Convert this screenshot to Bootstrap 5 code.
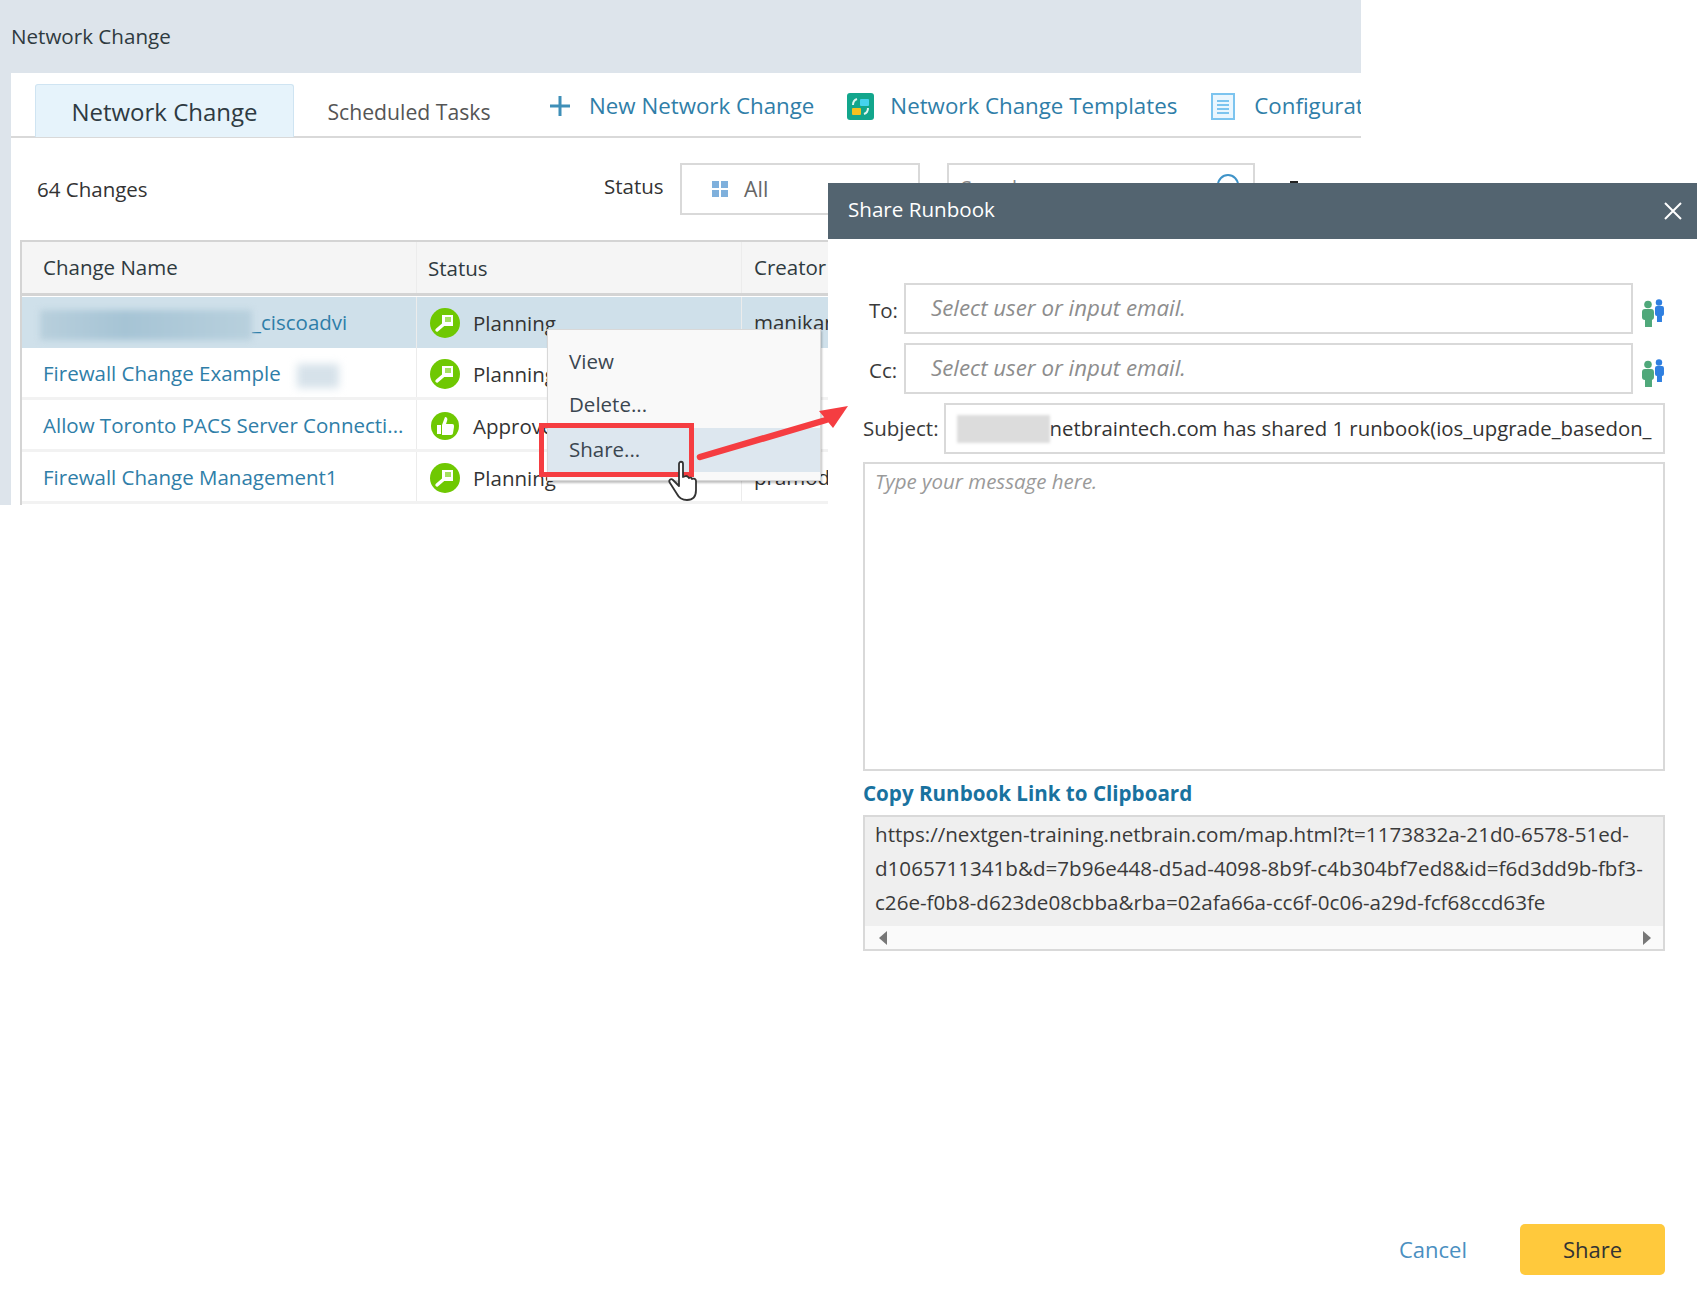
<!DOCTYPE html>
<html lang="en">
<head>
<meta charset="utf-8">
<title>Share Runbook</title>
<link href="https://cdn.jsdelivr.net/npm/bootstrap@5.3.0/dist/css/bootstrap.min.css" rel="stylesheet">
<style>
html,body{height:1311px;width:1697px;overflow:hidden;background:#fff}
body{font-family:"Open Sans","Noto Sans",sans-serif;font-size:20.5px;color:#333;position:relative}
.app-shot{width:1361px;height:505px;background:#dde4eb;overflow:hidden;position:relative}
.app-title{height:73px;padding:21px 0 0 11px;font-size:20.6px;line-height:30px;color:#2f3a40}
.app-body{margin-left:11px;background:#fff;height:432px}
.tab-strip{height:65px;border-bottom:2px solid #d9d9d9;padding-left:24px;position:relative;white-space:nowrap}
.tab-on{flex:none;width:259px;height:53px;margin-top:11px;background:#e6f3fb;border:1px solid #cfe4f2;border-bottom:0;border-radius:3px 3px 0 0;font-size:24px;line-height:54px;text-align:center;color:#2e3a42}
.tab-off{flex:none;width:230px;padding-top:14px;font-size:21.2px;line-height:50px;text-align:center;color:#555}
.act{flex:none;color:#2f7ea8;font-size:22.3px;line-height:30px;white-space:nowrap;height:46px;align-self:flex-start;margin-top:10px}
.filter-bar{height:102px;position:relative}
.count-lab{position:absolute;left:26px;top:36px;line-height:30px}
.status-lab{position:absolute;left:593px;top:33px;line-height:30px}
.box-filter{position:absolute;left:669px;top:25px;width:240px;height:52px;border:2px solid #d9d9d9;padding-left:30px;color:#666;font-size:21.4px}
.box-search{position:absolute;left:936px;top:25px;width:308px;height:52px;border:2px solid #d9d9d9;padding:8px 0 0 12px;color:#888;font-size:20px;line-height:30px}
.search-ring{position:absolute;left:265px;top:6px}
.peek-mark{position:absolute;left:1279px;top:43px;width:8px;height:4px;background:#222}
.grid-wrap{margin-left:9px;width:1341px;border-left:2px solid #d4d4d4;border-top:2px solid #d4d4d4;height:265px}
.g-row{display:flex;height:52px;border-bottom:3px solid #f2f2f2;line-height:50px;background:#fff}
.g-head{background:#f5f5f5;border-bottom:3px solid #d4d4d4;height:54px;line-height:50px;color:#2f3a40}
.g-sel{background:#cfe0ea;border-bottom:0;height:51px;margin-top:1px;line-height:50px}
.c1{width:395px;padding-left:21px;border-right:1px solid #ececec;white-space:nowrap}
.c2{width:325px;padding-left:13px;border-right:1px solid #ececec;white-space:nowrap;display:flex;align-items:center;gap:13px}
.g-head .c2{padding-left:11px}
.g-plain .c2{padding-top:2px}
.c3{padding-left:12px;white-space:nowrap}
.grid-link{color:#2f7ea8;text-decoration:none}
.blur-a{display:inline-block;width:212px;height:30px;margin-left:-3px;vertical-align:middle;background:linear-gradient(90deg,#b8cfdc,#a6c4d5 40%,#b8d0dd);filter:blur(3px)}
.blur-b{display:inline-block;width:42px;height:24px;margin-left:16px;vertical-align:middle;background:#d6e2ea;filter:blur(4px)}
.ctx{position:absolute;left:547px;top:329px;width:274px;height:152px;background:#f9f9f9;border:1px solid #d8d8d8;box-shadow:1px 2px 2px rgba(0,0,0,.25);color:#3b4650;padding-top:13px}
.ctx-it{height:43px;line-height:36px;padding-left:21px}
.ctx-on{background:#dde7ef;height:44px;line-height:42px;margin-top:-1px}
.hl-box{position:absolute;left:539px;top:423px;width:155px;height:54px;border:5px solid #f53d41;pointer-events:none}
.hand{position:absolute;left:667px;top:460px;width:34px;height:42px}
.arrow{position:absolute;left:696px;top:400px;width:154px;height:62px;z-index:5}
.share-dlg{position:absolute;left:828px;top:183px;width:869px;height:1128px;background:#fff}
.dlg-head{height:56px;background:#536470;color:#fff;font-size:20.6px;line-height:53px;padding:0 20px;font-weight:500}
.dlg-x{position:absolute;left:835px;top:18px;width:20px;height:20px}
.dlg-form{padding:0 32px 0 35px;color:#3a3a3a}
.f-row{display:flex;align-items:flex-start;height:51px;margin-top:9px}
.f-row-first{margin-top:44px}
.f-lab{white-space:nowrap;line-height:30px;padding-top:12px}
.f-lab-short{width:32px;margin-left:6px;text-align:left}
.mail-in{width:730px;height:51px;margin-left:3px;border:2px solid #d9d9d9;font-style:italic;color:#8d8d8d;font-size:22.3px;line-height:46px;padding-left:25px;white-space:nowrap}
.subj{flex:1;min-width:0;height:51px;border:2px solid #d9d9d9;margin-left:5px;padding:0 11px;font-size:20.35px;white-space:nowrap;display:flex;align-items:center;color:#333}
.blur-c{flex:none;width:93px;height:28px;background:#dcdcdc;filter:blur(1.5px)}
.msg{height:309px;border:2px solid #d9d9d9;margin-top:8px;padding:2px 10px;font-style:italic;color:#9a9a9a}
.copy-l{display:block;font-weight:700;color:#19729f;font-size:20.6px;line-height:28px;margin-top:8px;text-decoration:none}
.link-box{margin-top:8px;height:136px;border:2px solid #d9d9d9;background:#fafafa}
.link-txt{background:#efefef;height:109px;padding:0 10px;font-size:20.6px;line-height:34px;color:#3a3a3a;white-space:nowrap;overflow:hidden}
.bar-ar{height:23px;padding:0 12px 0 14px;align-items:center}
.dlg-foot{position:absolute;right:32px;top:1041px;display:flex;align-items:center;gap:53px}
.cancel-l{color:#4a8fc1;font-size:22px;text-decoration:none}
.share-b{width:145px;height:51px;background:#ffc93c;border:0;border-radius:5px;font-size:22px;color:#333;padding:0}
.share-b:hover{background:#ffc93c}
</style>
</head>
<body>
<svg width="0" height="0" class="position-absolute">
  <symbol id="ic-plan" viewBox="0 0 30 30"><circle cx="15" cy="15" r="15" fill="#6fc802"/><rect x="12" y="7" width="11" height="11" fill="#fff"/><rect x="15" y="9" width="6" height="5" fill="#a5e060"/><path d="M14 16 7 22" stroke="#fff" stroke-width="3.4" stroke-linecap="round"/></symbol>
  <symbol id="ic-ok" viewBox="0 0 30 30"><circle cx="15" cy="15" r="14" fill="#6fc802"/><path d="M7 14h4v9H7zM12 14l3-8c2 0 3 2 2 4l-1 3h6c2 0 2 1 2 3l-1 6c0 1-1 2-2 2h-9z" fill="#fff"/></symbol>
  <symbol id="ic-people" viewBox="0 0 24 28"><g fill="#2f7fe0"><circle cx="18" cy="3.5" r="3.2"/><rect x="14" y="7" width="9" height="10" rx="2"/><rect x="16" y="14" width="5" height="9"/></g><g fill="#4fa87a"><circle cx="7" cy="5.500" r="3.800"/><rect x="1" y="10" width="12" height="11" rx="3"/><rect x="4" y="18" width="7" height="10"/></g></symbol>
</svg>
<div class="app-shot">
  <div class="app-title">Network Change</div>
  <div class="app-body">
    <div class="tab-strip d-flex">
      <div class="tab-on">Network Change</div>
      <div class="tab-off">Scheduled Tasks</div>
      <div class="act d-flex align-items-center" style="margin-left:25px">
        <svg width="22" height="24" viewBox="0 0 22 24"><path d="M11 2v20M1 12h20" stroke="#3f8fb8" stroke-width="3"/></svg><span style="margin-left:18px">New Network Change</span></div>
      <div class="act d-flex align-items-center" style="margin-left:33px">
        <svg width="27" height="27" viewBox="0 0 27 27"><rect width="27" height="27" rx="3" fill="#12a68c"/><rect x="13" y="6" width="9" height="7" rx="1" fill="#45d3ee"/><rect x="5" y="15" width="9" height="7" rx="1" fill="#f3c11f"/><path d="M6 12c0-3 1-5 4-6M21 15c0 3-1 5-4 6" fill="none" stroke="#dff5ef" stroke-width="2"/></svg><span class="ms-3">Network Change Templates</span></div>
      <div class="act d-flex align-items-center" style="margin-left:34px">
        <svg width="24" height="27" viewBox="0 0 24 27"><rect x="1" y="1" width="22" height="25" fill="#eaf6fe" stroke="#7cc4ef" stroke-width="2"/><path d="M6 8h12M6 12h12M6 16h12M6 20h12" stroke="#7cc4ef" stroke-width="1.800"/></svg><span style="margin-left:19px">Configuration</span></div>
    </div>
    <div class="filter-bar">
      <div class="count-lab">64 Changes</div>
      <div class="status-lab">Status</div>
      <div class="box-filter d-flex align-items-center gap-3">
        <svg width="16" height="16" viewBox="0 0 16 16"><g fill="#7fb0dc"><rect width="7" height="7"/><rect x="9" width="7" height="7"/><rect y="9" width="7" height="7"/><rect x="9" y="9" width="7" height="7"/></g></svg>All</div>
      <div class="box-search">Search...<svg width="28" height="28" viewBox="0 0 28 28" class="search-ring"><circle cx="14" cy="14" r="10" fill="none" stroke="#3f93c8" stroke-width="2"/></svg></div>
      <span class="peek-mark"></span>
    </div>
    <div class="grid-wrap">
      <div class="g-row g-head"><div class="c1">Change Name</div><div class="c2">Status</div><div class="c3">Creator</div></div>
      <div class="g-row g-sel"><div class="c1"><span class="blur-a"></span><a class="grid-link" href="#">_ciscoadvi</a></div><div class="c2"><svg width="30" height="30"><use href="#ic-plan"/></svg>Planning</div><div class="c3">manikanta</div></div>
      <div class="g-row g-plain"><div class="c1"><a class="grid-link" href="#">Firewall Change Example</a><span class="blur-b"></span></div><div class="c2"><svg width="30" height="30"><use href="#ic-plan"/></svg>Planning</div><div class="c3">admin</div></div>
      <div class="g-row g-plain"><div class="c1"><a class="grid-link" href="#">Allow Toronto PACS Server Connecti...</a></div><div class="c2"><svg width="30" height="30"><use href="#ic-ok"/></svg>Approved</div><div class="c3">demo</div></div>
      <div class="g-row g-plain"><div class="c1"><a class="grid-link" href="#">Firewall Change Management1</a></div><div class="c2"><svg width="30" height="30"><use href="#ic-plan"/></svg>Planning</div><div class="c3">pramod</div></div>
    </div>
  </div>
</div>
<div class="ctx">
  <div class="ctx-it">View</div>
  <div class="ctx-it">Delete...</div>
  <div class="ctx-it ctx-on">Share...</div>
</div>
<div class="hl-box"></div>
<svg class="hand" viewBox="0 0 34 42"><path d="M12 4c0-3 4-3 4 0v13l3-1c2 0 2 1 3 2 2-1 3 0 3 1 2-1 4 0 4 2v9c0 6-3 10-9 10-5 0-8-2-10-6L3 23c-2-3 1-5 3-3l6 6z" fill="#fff" stroke="#333" stroke-width="1.8" stroke-linejoin="round"/></svg>
<svg class="arrow" viewBox="0 0 154 62"><path d="M4 57 130 20" stroke="#f53d41" stroke-width="6.500" stroke-linecap="round"/><path d="M152 6 137 28 123 11z" fill="#f53d41"/></svg>
<div class="share-dlg">
  <div class="dlg-head">Share Runbook</div>
  <svg class="dlg-x" viewBox="0 0 20 20"><path d="M2 2l16 16M18 2L2 18" stroke="#fff" stroke-width="2"/></svg>
  <div class="dlg-form">
    <div class="f-row f-row-first">
      <div class="f-lab f-lab-short">To:</div>
      <div class="mail-in">Select user or input email.</div>
      <svg width="24" height="28" class="ms-2 mt-3"><use href="#ic-people"/></svg>
    </div>
    <div class="f-row">
      <div class="f-lab f-lab-short">Cc:</div>
      <div class="mail-in">Select user or input email.</div>
      <svg width="24" height="28" class="ms-2 mt-3"><use href="#ic-people"/></svg>
    </div>
    <div class="f-row">
      <div class="f-lab" style="padding-top:10px">Subject:</div>
      <div class="subj"><span class="blur-c"></span><span>netbraintech.com has shared 1 runbook(ios_upgrade_basedon_</span></div>
    </div>
    <div class="msg">Type your message here.</div>
    <a class="copy-l" href="#">Copy Runbook Link to Clipboard</a>
    <div class="link-box">
      <div class="link-txt">https://nextgen-training.netbrain.com/map.html?t=1173832a-21d0-6578-51ed-<br>d1065711341b&amp;d=7b96e448-d5ad-4098-8b9f-c4b304bf7ed8&amp;id=f6d3dd9b-fbf3-<br>c26e-f0b8-d623de08cbba&amp;rba=02afa66a-cc6f-0c06-a29d-fcf68ccd63fe</div>
      <div class="d-flex justify-content-between bar-ar">
        <svg width="8" height="14" viewBox="0 0 8 14"><path d="M8 0v14L0 7z" fill="#777"/></svg>
        <svg width="8" height="14" viewBox="0 0 8 14"><path d="M0 0v14l8-7z" fill="#777"/></svg>
      </div>
    </div>
  </div>
  <div class="dlg-foot">
    <a class="cancel-l" href="#">Cancel</a>
    <button class="btn share-b" type="button">Share</button>
  </div>
</div>
<script src="https://cdn.jsdelivr.net/npm/bootstrap@5.3.0/dist/js/bootstrap.bundle.min.js"></script>
</body>
</html>
